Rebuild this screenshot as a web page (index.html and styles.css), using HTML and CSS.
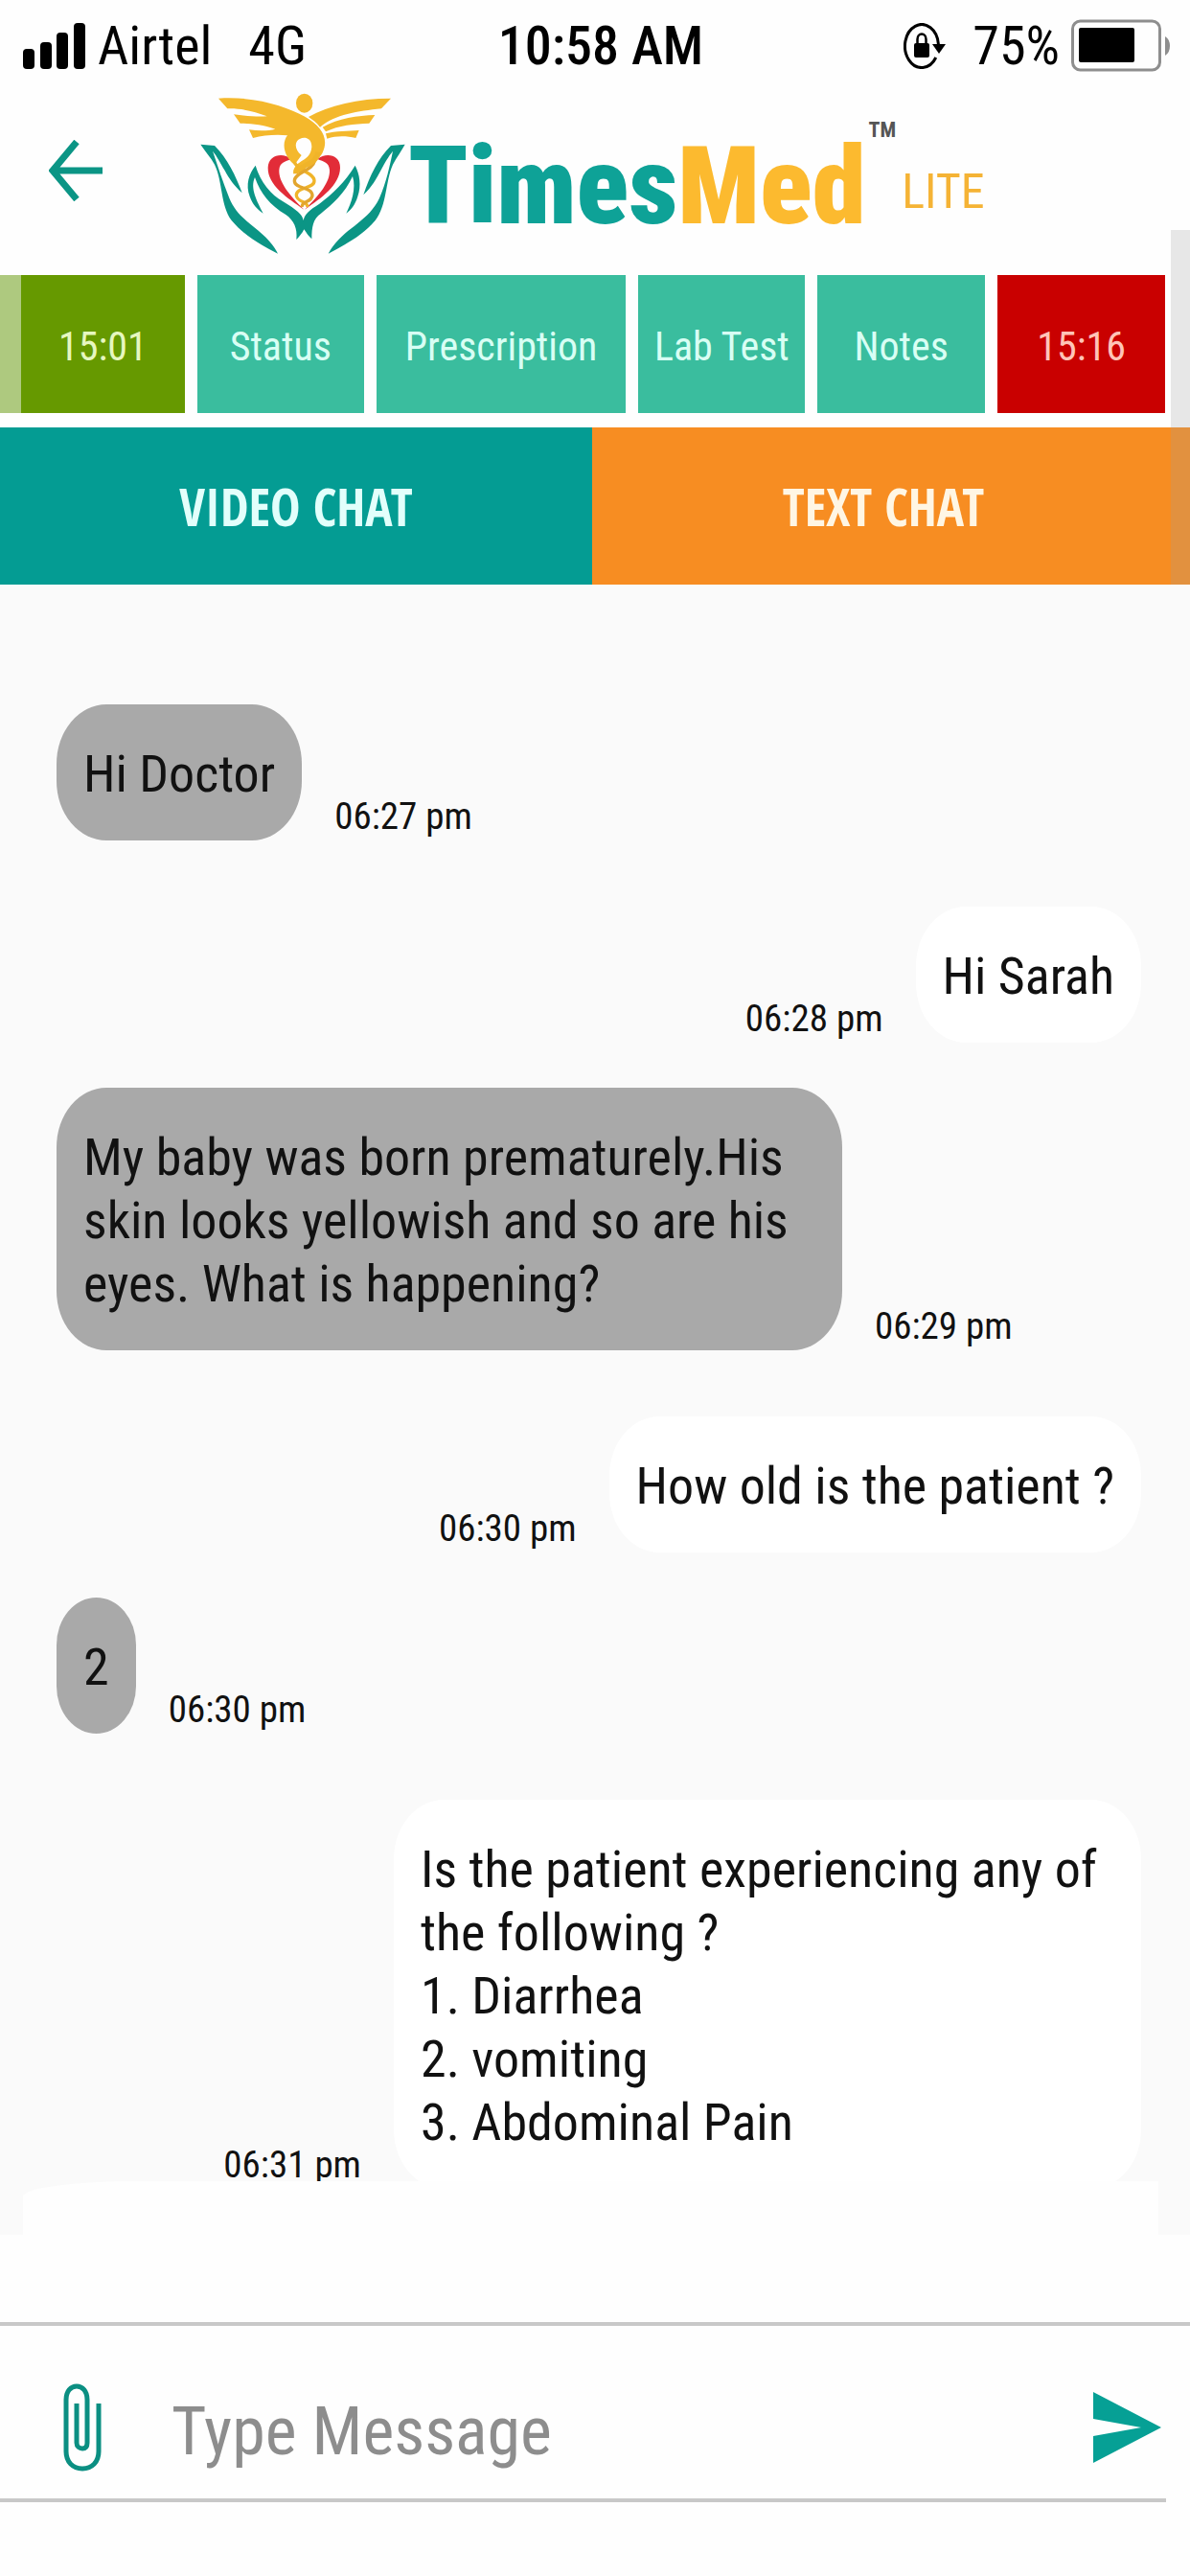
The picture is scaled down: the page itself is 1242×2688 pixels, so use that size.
FILE: index.html
```html
<!DOCTYPE html>
<html lang="en">
<head>
<meta charset="utf-8">
<meta name="viewport" content="width=device-width, initial-scale=1">
<title>TimesMed Lite – Text Chat</title>
<link rel="stylesheet" href="styles.css">
</head>
<body>
<div class="app">
  <div class="status">
    <div class="status-side">
      <svg class="signal" viewBox="0 0 66 48" aria-hidden="true"><rect x="0" y="27" width="12" height="21" rx="4"/><rect x="18" y="20" width="12" height="28" rx="4"/><rect x="35" y="10" width="12" height="38" rx="4"/><rect x="53" y="0" width="12" height="48" rx="4"/></svg>
      <span class="carrier">Airtel</span>
      <span>4G</span>
    </div>
    <span class="clock">10:58 AM</span>
    <div class="status-side status-end">
      <svg class="lock" viewBox="0 0 44 48" aria-hidden="true"><path d="M33.800 36A17.500 22.500 0 1 1 36.400 22" fill="none" stroke="#000" stroke-width="3"/><path d="M30 22h14l-7 10z"/><rect x="11" y="21" width="16" height="15" rx="2"/><path d="M14.500 22v-5a4.500 5.500 0 0 1 9 0v5" fill="none" stroke="#000" stroke-width="2.500"/></svg>
      <span class="percent">75%</span>
      <svg class="battery" viewBox="0 0 104 56" aria-hidden="true"><rect x="1.500" y="2" width="91" height="51" rx="8" fill="none" stroke="#8e8e8e" stroke-width="3"/><rect x="8" y="9" width="58" height="36" rx="2"/><path d="M98 18q5 3 5 10t-5 10z" fill="#8e8e8e"/></svg>
    </div>
  </div>

  <header class="brand">
    <button class="back" type="button" aria-label="Back"><svg viewBox="0 0 56 64" aria-hidden="true"><path d="M29 2L4 32l25 30M5 32h51" fill="none" stroke="#0b9585" stroke-width="7"/></svg></button>
    <svg class="emblem" viewBox="0 0 690 540" preserveAspectRatio="none" aria-hidden="true">
      <g fill="#e22c38">
        <path d="M312 228C285 206 240 215 239 255C238 310 300 350 352 386C305 340 272 300 274 262C276 238 292 236 312 228Z"/>
        <path d="M394 228C421 206 466 215 465 255C464 310 406 350 354 386C401 340 434 300 432 262C430 238 414 236 394 228Z"/>
      </g>
      <g fill="#0b9585">
        <path d="M28 182L72 186C112 226 138 280 158 334C132 310 118 290 104 264C88 238 80 220 66 203C82 250 98 300 118 350C150 430 230 445 270 524C215 496 165 468 125 420C90 372 98 300 72 245C60 222 42 204 28 182Z"/>
        <path d="M668 182L624 186C584 226 558 280 538 340C564 316 578 290 592 264C606 238 616 220 630 203C620 250 610 300 588 350C550 430 470 445 428 524C480 496 535 468 575 420C612 372 606 300 630 245C642 222 656 204 668 182Z"/>
        <path d="M200 248C215 300 250 340 285 360C330 388 346 400 350 420C354 400 368 388 400 368C440 338 480 300 512 248C526 275 532 310 520 345C512 372 498 388 484 398C500 365 516 320 504 282C480 335 440 370 405 398C380 415 376 440 376 478C366 470 360 460 352 448C346 460 338 470 328 480C332 445 320 420 295 402C245 372 215 335 198 285C182 320 205 360 224 398C205 386 190 368 182 345C168 308 180 272 200 248Z"/>
      </g>
      <g fill="#f4b82c">
        <ellipse cx="353" cy="53" rx="26" ry="30"/>
        <path d="M84 38C200 30 300 65 352 94C410 126 430 165 410 208C396 238 362 236 348 272L318 268C326 228 372 238 376 190C376 160 352 158 340 164C324 168 318 196 344 216L322 246C290 220 280 180 300 154C262 150 226 154 192 162L180 136C210 140 240 140 262 134C222 120 186 116 152 116L132 88C162 92 200 96 236 94C196 78 150 68 112 70Z"/>
        <path d="M624 38C520 38 430 60 366 96C380 106 392 114 402 128C450 88 520 78 594 70Z"/>
        <path d="M574 90C520 92 460 100 410 128L420 142C460 122 510 118 556 116Z"/>
        <path d="M524 138C490 140 450 140 420 148L424 164C456 154 486 156 514 162Z"/>
      </g>
      <g fill="none" stroke="#f0b429" stroke-width="10">
        <path d="M322 236C326 262 384 270 384 296C384 322 326 314 328 342C330 364 366 360 362 378"/>
        <path d="M384 236C380 262 322 270 322 296C322 322 378 314 378 342C376 364 342 360 346 378" stroke="#e2a52e"/>
        <path d="M396 206C392 234 372 240 352 250C338 256 326 262 326 274" stroke-width="16"/>
      </g>
    </svg>
    <h1 class="name"><span>Times</span><span class="med">Med</span></h1>
    <span class="tm">TM</span>
    <span class="lite">LITE</span>
  </header>

  <nav class="actions" aria-label="Consultation">
    <button class="action start" type="button">15:01</button>
    <button class="action" type="button">Status</button>
    <button class="action" type="button">Prescription</button>
    <button class="action" type="button">Lab Test</button>
    <button class="action" type="button">Notes</button>
    <button class="action end" type="button">15:16</button>
  </nav>

  <nav class="modes" aria-label="Chat mode">
    <button class="mode" type="button">VIDEO CHAT</button>
    <button class="mode text" type="button">TEXT CHAT</button>
  </nav>
  <div class="scrollbar"></div>

  <main class="chat">
    <div class="msg"><p class="bubble">Hi Doctor</p><time>06:27 pm</time></div>
    <div class="msg sent"><p class="bubble">Hi Sarah</p><time>06:28 pm</time></div>
    <div class="msg"><p class="bubble">My baby was born prematurely.His skin looks yellowish and so are his eyes. What is happening?</p><time>06:29 pm</time></div>
    <div class="msg sent"><p class="bubble">How old is the patient ?</p><time>06:30 pm</time></div>
    <div class="msg"><p class="bubble">2</p><time>06:30 pm</time></div>
    <div class="msg sent"><p class="bubble">Is the patient experiencing any of the following ?<br>1. Diarrhea<br>2. vomiting<br>3. Abdominal Pain</p><time>06:31 pm</time></div>
    <div class="sheet"></div>
  </main>

  <form class="composer">
    <div class="composer-row">
      <button class="attach" type="button" aria-label="Attach file"><svg viewBox="0 0 40 92" aria-hidden="true"><path d="M37 21V71C37 82 30 89 20 89S3 82 3 71V17C3 8 8 3 14 3S25 8 25 17V62C25 66 23 68 20 68S14 66 14 62V21" fill="none" stroke="#0b8f82" stroke-width="5"/></svg></button>
      <input class="field" type="text" placeholder="Type Message" aria-label="Type Message">
      <button class="send" type="button" aria-label="Send"><svg viewBox="0 0 71 74" aria-hidden="true"><path d="M0 0L71 37L0 74V46L50 37L0 28Z" fill="#06a095"/></svg></button>
    </div>
  </form>
</div>
</body>
</html>
```
FILE: styles.css
```css
* { box-sizing: border-box; }

body {
  margin: 0;
  background: #fefefe;
  color: #111;
  font-family: "Roboto Condensed", Roboto, sans-serif;
}

button {
  border: 0;
  padding: 0;
  background: none;
  font: inherit;
}

svg { display: block; }

.app {
  position: relative;
  display: flex;
  flex-direction: column;
  min-height: 100vh;
}

/* Phone status bar */
.status {
  display: grid;
  grid-template-columns: 1fr auto 1fr;
  align-items: center;
  height: 96px;
  padding: 0 20px 0 24px;
  color: #000;
  font-size: 56px;
}

.status-side {
  display: flex;
  align-items: center;
  gap: 12px;
}

.status-end { justify-content: flex-end; }
.signal { width: 66px; height: 48px; }
.carrier { margin-right: 26px; }
.clock { padding-left: 8px; font-weight: 500; }
.lock { width: 44px; height: 48px; }
.percent { margin-left: 16px; }
.battery { width: 104px; height: 56px; }

/* Brand bar */
.brand {
  display: flex;
  align-items: center;
  height: 191px;
  padding-left: 51px;
}

.back svg { width: 56px; height: 64px; }

.back {
  align-self: flex-start;
  margin-top: 50px;
}

.emblem {
  align-self: flex-start;
  width: 230px;
  height: 180px;
  margin-left: 93px;
  margin-top: -6px;
}

.name {
  margin: 6px 3px 0 -4px;
  color: #0ea297;
  font-size: 113px;
  font-weight: 900;
  line-height: 180px;
}

.med { color: #fcba2f; }

.tm {
  align-self: flex-start;
  margin-top: 27px;
  color: #555;
  font-size: 22px;
  font-weight: 700;
}

.lite {
  margin-left: 6px;
  margin-top: 16px;
  color: #f5b335;
  font-size: 50px;
}

/* Consultation actions */
.actions {
  display: grid;
  grid-template-columns: 193fr 174fr 261fr 174fr 175fr 175fr;
  gap: 13px;
  padding: 0 26px 15px 0;
}

.action {
  height: 144px;
  padding-top: 4px;
  background: #3abd9e;
  color: #d8fff4;
  font-size: 42px;
}

.start {
  border-left: 22px solid #aec97f;
  background: #669900;
  color: #e6f7c0;
}

.end {
  background: #c90000;
  color: #ffc4b8;
}

.modes {
  display: grid;
  grid-template-columns: 618fr 624fr;
}

.mode {
  height: 164px;
  background: #049c93;
  color: #e2fffb;
  font-family: "Open Sans Condensed", "Open Sans", sans-serif;
  font-size: 53px;
  font-weight: 700;
}

.text {
  padding-right: 16px;
  background: #f78d22;
  color: #fff6e4;
}

.scrollbar {
  position: absolute;
  top: 240px;
  right: 0;
  width: 20px;
  height: 370px;
  background: rgba(160, 160, 160, 0.24);
}

/* Conversation */
.chat {
  display: flex;
  flex-direction: column;
  padding: 125px 51px 0 59px;
  background: #fafafa;
}

.msg {
  display: flex;
  align-items: flex-end;
  gap: 34px;
  margin-bottom: 69px;
}

.sent {
  flex-direction: row-reverse;
  margin-bottom: 47px;
}

.bubble {
  max-width: 820px;
  margin: 0;
  padding: 40px 28px 36px;
  border-radius: 52px / 62px;
  background: #a9a9a9;
  font-size: 54px;
  line-height: 66px;
}

.sent .bubble {
  max-width: 780px;
  background: #fff;
}

.msg time {
  font-size: 39px;
  line-height: 50px;
}

.sheet {
  height: 56px;
  margin: -55px -18px 0 -35px;
  border-radius: 120px 0 0 0 / 16px 0 0 0;
  background: #fefefe;
  z-index: 1;
}

/* Message composer */
.composer {
  margin-top: auto;
  padding-bottom: 77px;
  border-top: 4px solid #c8c8c8;
}

.composer-row {
  display: flex;
  align-items: center;
  height: 184px;
  margin-right: 25px;
  padding: 32px 5px 0 66px;
  border-bottom: 4px solid #c8c8c8;
}

.attach svg { width: 40px; height: 92px; }

.field {
  flex: 1;
  min-width: 0;
  margin: 8px 40px 0 73px;
  padding: 0;
  border: 0;
  outline: 0;
  background: none;
  color: #111;
  font: inherit;
  font-size: 70px;
}

.field::placeholder { color: #8d8d8d; }

.send svg { width: 71px; height: 74px; }
```
